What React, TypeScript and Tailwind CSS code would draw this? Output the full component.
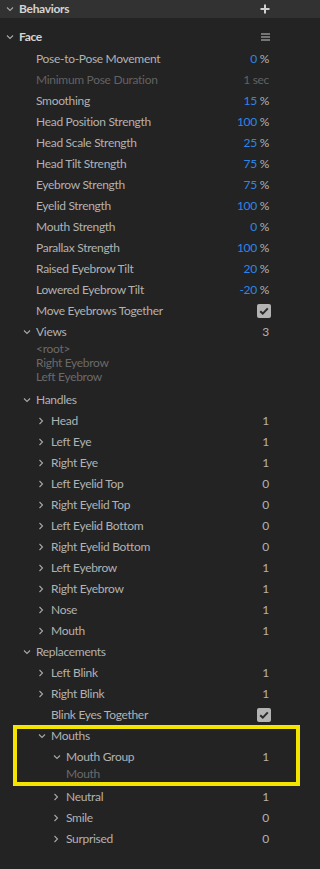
import React from "react";

type Row = {
  level: 1 | 2 | 3;
  label: string;
  value?: string;
  unit?: string;
  chevron?: "down" | "right";
  check?: boolean;
  dim?: boolean;
  sub?: string[];
};

const pad = { 1: "pl-[22px]", 2: "pl-[37px]", 3: "pl-[52px]" };
const subPad = { 1: "pl-[36px]", 2: "pl-[51px]", 3: "pl-[66px]" };

function Chevron({ dir }: { dir: "down" | "right" }) {
  if (dir === "down")
    return (
      <svg width="8" height="6" viewBox="0 0 8 6" className="ml-[1px]">
        <path d="M1 1.5 L4 4.5 L7 1.5" fill="none" stroke="#a8a8a8" strokeWidth="1.1" />
      </svg>
    );
  return (
    <svg width="6" height="8" viewBox="0 0 6 8" className="ml-[1px]">
      <path d="M1.5 1 L4.5 4 L1.5 7" fill="none" stroke="#a8a8a8" strokeWidth="1.1" />
    </svg>
  );
}

function Check() {
  return (
    <div className="w-[14px] h-[14px] rounded-[2px] bg-[#b3b3b3] flex items-center justify-center mr-[-2px]">
      <svg width="10" height="8" viewBox="0 0 10 8">
        <path d="M1.2 4.2 L3.8 6.6 L8.8 1.4" fill="none" stroke="#2a2a2a" strokeWidth="2" />
      </svg>
    </div>
  );
}

function PropRow({ r }: { r: Row }) {
  return (
    <>
      <div className={`flex h-[21px] items-center pr-[51px] ${pad[r.level]}`}>
        <div className="w-[14px] flex items-center shrink-0">
          {r.chevron && <Chevron dir={r.chevron} />}
        </div>
        <span className={`flex-1 ${r.dim ? "text-[#626262]" : "text-[#b2b2b2]"}`}>{r.label}</span>
        {r.check && <Check />}
        {r.value !== undefined && (
          <span>
            <span className={r.dim ? "text-[#626262]" : r.unit ? "text-[#2d86e6]" : "text-[#b2b2b2]"}>
              {r.value}
            </span>
            {r.unit && <span className={r.dim ? "text-[#626262]" : "text-[#b2b2b2]"}> {r.unit}</span>}
          </span>
        )}
      </div>
      {r.sub && (
        <div className={`flex flex-col pb-[5px] text-[#6a6a6a] ${subPad[r.level]}`}>
          {r.sub.map((s) => (
            <div key={s} className="h-[14px] leading-[14px]">
              {s}
            </div>
          ))}
        </div>
      )}
    </>
  );
}

const faceRows: Row[] = [
  { level: 1, label: "Pose-to-Pose Movement", value: "0", unit: "%" },
  { level: 1, label: "Minimum Pose Duration", value: "1", unit: "sec", dim: true },
  { level: 1, label: "Smoothing", value: "15", unit: "%" },
  { level: 1, label: "Head Position Strength", value: "100", unit: "%" },
  { level: 1, label: "Head Scale Strength", value: "25", unit: "%" },
  { level: 1, label: "Head Tilt Strength", value: "75", unit: "%" },
  { level: 1, label: "Eyebrow Strength", value: "75", unit: "%" },
  { level: 1, label: "Eyelid Strength", value: "100", unit: "%" },
  { level: 1, label: "Mouth Strength", value: "0", unit: "%" },
  { level: 1, label: "Parallax Strength", value: "100", unit: "%" },
  { level: 1, label: "Raised Eyebrow Tilt", value: "20", unit: "%" },
  { level: 1, label: "Lowered Eyebrow Tilt", value: "-20", unit: "%" },
  { level: 1, label: "Move Eyebrows Together", check: true },
  { level: 1, label: "Views", chevron: "down", value: "3", sub: ["<root>", "Right Eyebrow", "Left Eyebrow"] },
  { level: 1, label: "Handles", chevron: "down" },
  ...["Head", "Left Eye", "Right Eye", "Left Eyelid Top", "Right Eyelid Top", "Left Eyelid Bottom", "Right Eyelid Bottom", "Left Eyebrow", "Right Eyebrow", "Nose", "Mouth"].map(
    (l, i): Row => ({ level: 2, label: l, chevron: "right", value: [1, 1, 1, 0, 0, 0, 0, 1, 1, 1, 1][i].toString() })
  ),
  { level: 1, label: "Replacements", chevron: "down" },
  { level: 2, label: "Left Blink", chevron: "right", value: "1" },
  { level: 2, label: "Right Blink", chevron: "right", value: "1" },
  { level: 2, label: "Blink Eyes Together", check: true },
];

const mouthRows: Row[] = [
  { level: 2, label: "Mouths", chevron: "down" },
  { level: 3, label: "Mouth Group", chevron: "down", value: "1", sub: ["Mouth"] },
];

const tailRows: Row[] = [
  { level: 3, label: "Neutral", chevron: "right", value: "1" },
  { level: 3, label: "Smile", chevron: "right", value: "0" },
  { level: 3, label: "Surprised", chevron: "right", value: "0" },
];

export default function App() {
  return (
    <div
      className="w-[320px] h-[869px] bg-[#232323] text-[12px] tracking-[-0.3px] overflow-hidden"
      style={{ fontFamily: "Lato, 'Open Sans', sans-serif" }}
    >
      <div className="h-[18px] bg-[#323232] flex items-center pl-[5px] pr-[50px]">
        <div className="w-[14px] flex items-center">
          <Chevron dir="down" />
        </div>
        <span className="flex-1 font-bold text-[#d4d4d4]">Behaviors</span>
        <svg width="10" height="10" viewBox="0 0 10 10">
          <path d="M5 0.5 V9.5 M0.5 5 H9.5" stroke="#d0d0d0" strokeWidth="2" />
        </svg>
      </div>

      <div className="pt-[7px]">
        <div className="flex h-[23px] items-center pl-[5px] pr-[50px]">
          <div className="w-[14px] flex items-center">
            <Chevron dir="down" />
          </div>
          <span className="flex-1 font-bold text-[#d4d4d4]">Face</span>
          <svg width="9" height="8" viewBox="0 0 9 8">
            <path d="M0 1 H9 M0 4 H9 M0 7 H9" stroke="#c8c8c8" strokeWidth="1" />
          </svg>
        </div>

        {faceRows.map((r) => (
          <PropRow key={r.label + r.level} r={r} />
        ))}

        <div className="relative">
          {mouthRows.map((r) => (
            <PropRow key={r.label} r={r} />
          ))}
          <div className="absolute left-[13px] w-[287px] top-0 bottom-0 border-4 border-[#f4e500]" />
        </div>

        {tailRows.map((r) => (
          <PropRow key={r.label} r={r} />
        ))}
      </div>
    </div>
  );
}
